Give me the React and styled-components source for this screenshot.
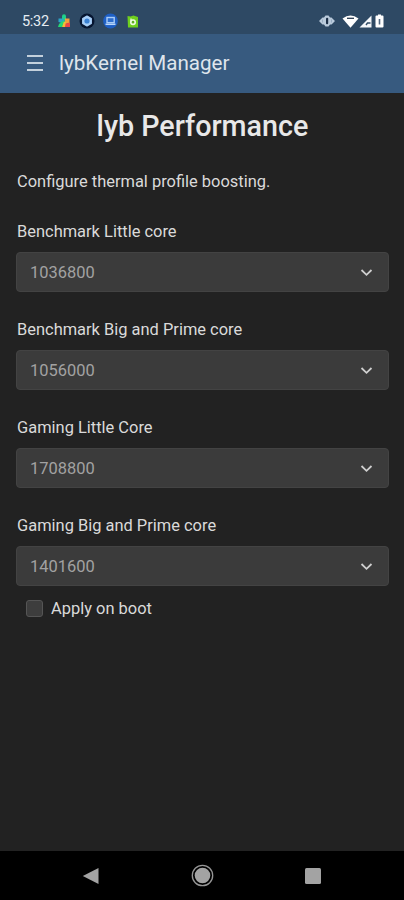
import React, { useState } from 'react';
import { styled, createGlobalStyle } from 'styled-components';

const GlobalStyle = createGlobalStyle`
  * {
    box-sizing: border-box;
  }

  body {
    margin: 0;
    background: #222;
    font-family: Roboto, 'Liberation Sans', sans-serif;
  }
`;

const Screen = styled.div`
  display: flex;
  flex-direction: column;
  width: 404px;
  height: 900px;
  overflow: hidden;
  background: #222;
  color: #dadada;
`;

const StatusBar = styled.div`
  display: flex;
  justify-content: space-between;
  align-items: center;
  height: 34px;
  padding: 8px 20px 0 22px;
  background: #2e4964;
`;

const StatusGroup = styled.div`
  display: flex;
  align-items: center;
  gap: ${props => props.$gap};
`;

const Clock = styled.span`
  width: 28px;
  margin-right: -1px;
  padding-top: 2px;
  font-size: 14.5px;
  line-height: 16px;
  letter-spacing: -0.3px;
  color: #e6edf3;
`;

const Header = styled.header`
  display: flex;
  align-items: center;
  gap: 16px;
  height: 59px;
  padding: 0 27px 2px;
  background: #375a7f;
`;

const MenuButton = styled.button`
  display: flex;
  padding: 0;
  border: none;
  background: none;
  cursor: pointer;
`;

const AppName = styled.span`
  font-size: 20.6px;
  line-height: 24px;
  color: #dfe5ec;
`;

const Content = styled.main`
  flex: 1;
  padding: 16px 15px 0 16px;
`;

const Title = styled.h1`
  margin: 0;
  font-size: 28.7px;
  font-weight: 500;
  line-height: 34px;
  text-align: center;
  color: #e8e8e8;
`;

const Description = styled.p`
  margin: 27px 0 26px;
  padding-left: 1px;
  font-size: 16.45px;
  line-height: 24px;
`;

const Field = styled.div`
  margin-bottom: 26px;

  &:last-of-type {
    margin-bottom: 0;
  }
`;

const Label = styled.label`
  display: block;
  margin-bottom: 8px;
  padding-left: 1px;
  font-size: 16.45px;
  line-height: 24px;
`;

const Select = styled.button`
  display: flex;
  justify-content: space-between;
  align-items: center;
  width: 100%;
  height: 40px;
  padding: 0 15px 0 13px;
  border: 1px solid #434343;
  border-radius: 4px;
  background: #3b3b3b;
  font-family: inherit;
  font-size: 16.45px;
  color: #a2a2a2;
  cursor: pointer;
`;

const CheckRow = styled.label`
  display: flex;
  align-items: center;
  gap: 8px;
  margin-top: 11px;
  padding-left: 10px;
  font-size: 16.45px;
  line-height: 24px;
`;

const Checkbox = styled.input`
  appearance: none;
  width: 17px;
  height: 17px;
  margin: 0 0 1px;
  border: 1px solid #555;
  border-radius: 3px;
  background: ${props => (props.checked ? '#375a7f' : '#3d3d3d')};
`;

const NavBar = styled.nav`
  display: flex;
  justify-content: space-between;
  align-items: center;
  height: 49px;
  padding: 0 82px;
  background: #000;
`;

const fields = [
  { label: 'Benchmark Little core', value: '1036800' },
  { label: 'Benchmark Big and Prime core', value: '1056000' },
  { label: 'Gaming Little Core', value: '1708800' },
  { label: 'Gaming Big and Prime core', value: '1401600' },
];

const PuzzleIcon = () => (
  <svg width="14" height="14" viewBox="0 0 14 14">
    <path d="M5 4.5V2.2a2 2 0 0 1 4 0V5L7 8z" fill="#1fd08a" />
    <path d="M1.5 4.5H6l2 3-3 1.5-3.500-1z" fill="#2aa5c8" />
    <path d="M1 13l1-3 4-3.500 2 2L5 13z" fill="#25d873" />
    <path d="M8 4.5h4.500v5L8 8.500z" fill="#f0a13c" />
    <path d="M7 7.5l3 1-1 4.500H5z" fill="#f3bd38" />
    <path d="M8.5 9.500l4.500-1V13H8z" fill="#ee4545" />
  </svg>
);

const HexIcon = () => (
  <svg width="16" height="16" viewBox="0 0 16 16">
    <circle cx="8" cy="8" r="7.5" fill="#061530" />
    <path
      d="M8 3l4.300 2.500v5L8 13l-4.300-2.500v-5z"
      fill="#a9d0f8"
      stroke="#a9d0f8"
      strokeWidth="1.2"
      strokeLinejoin="round"
    />
    <circle cx="8" cy="8" r="2.6" fill="#3b82d4" />
  </svg>
);

const LaptopIcon = () => (
  <svg width="16" height="16" viewBox="0 0 16 16">
    <circle cx="7.5" cy="8" r="7.4" fill="#1e5fc4" />
    <rect x="4" y="4.5" width="7.2" height="5.2" fill="#2c6dce" stroke="#a9ccf7" strokeWidth="1.4" />
    <path d="M2.500 11.300h10" stroke="#b9d6fa" strokeWidth="1.5" />
  </svg>
);

const BadgeIcon = () => (
  <svg width="12" height="14" viewBox="0 0 12 14">
    <path d="M.5 2l3 .5 3-1L11 3v10.500H1z" fill="#6fd01e" />
    <circle cx="6" cy="8.2" r="2.2" fill="#5fae22" stroke="#effbe2" strokeWidth="1.6" />
    <path d="M4 4.500v3" stroke="#effbe2" strokeWidth="1.3" />
  </svg>
);

const VibrateIcon = () => (
  <svg width="16" height="12" viewBox="0 0 16 12">
    <path d="M0 6l3.500-3.500h1.500L6.500.5h3L11 2.500h1.500L16 6l-3.500 3.500H11L9.500 11.500h-3L5 9.500H3.500z" fill="#b9cadb" />
    <path d="M3.500 4.500v3M12.500 4.500v3" stroke="#8fa5bb" strokeWidth="0.8" />
    <rect x="7" y="2.7" width="2.2" height="6.6" rx="1" fill="#1d3048" />
  </svg>
);

const WifiIcon = () => (
  <svg width="17" height="13" viewBox="0 0 17 13">
    <path d="M.5 3.500Q8.500-2.500 16.500 3.500L8.500 12.800z" fill="#fff" />
    <path d="M5 3.300h7" stroke="#25384f" strokeWidth="1.3" fill="none" />
  </svg>
);

const SignalIcon = () => (
  <svg width="13" height="13" viewBox="0 0 13 13">
    <path d="M12.500.5v12H.5z" fill="#f4f7fa" />
    <path d="M7 10l1.500-2h3" stroke="#2e4964" strokeWidth="1.4" fill="none" />
  </svg>
);

const BatteryIcon = () => (
  <svg width="9" height="14" viewBox="0 0 9 14">
    <path d="M3 .5h3v1h1.500q1 0 1 1v10q0 1-1 1h-6q-1 0-1-1v-10q0-1 1-1H3z" fill="#fff" />
    <path d="M4.500 5v5.500" stroke="#50677f" strokeWidth="1.6" />
  </svg>
);

const MenuIcon = () => (
  <svg width="16" height="18" viewBox="0 0 16 18">
    <path d="M0 2h16M0 9h16M0 16h16" stroke="#c3d0dc" strokeWidth="2" />
  </svg>
);

const ChevronIcon = () => (
  <svg width="13" height="9" viewBox="0 0 13 9">
    <path d="M1.500 2l5 4.800 5-4.800" stroke="#cfcfcf" strokeWidth="1.8" fill="none" />
  </svg>
);

const BackIcon = () => (
  <svg width="18" height="18" viewBox="0 0 18 18">
    <path d="M16.500 1v16L.8 9z" fill="#a3a3a3" />
  </svg>
);

const HomeIcon = () => (
  <svg width="24" height="24" viewBox="0 0 24 24">
    <circle cx="12.5" cy="11.5" r="10.2" stroke="#969696" strokeWidth="1.3" fill="none" />
    <circle cx="12.5" cy="11.5" r="7.8" fill="#a3a3a3" />
  </svg>
);

const RecentsIcon = () => (
  <svg width="18" height="18" viewBox="0 0 18 18">
    <rect x="1" y="1" width="16" height="16" rx="1.5" fill="#a3a3a3" />
  </svg>
);

const App = () => {
  const [applyOnBoot, setApplyOnBoot] = useState(false);

  return (
    <>
      <GlobalStyle />
      <Screen>
        <StatusBar>
          <StatusGroup $gap="8px">
            <Clock>5:32</Clock>
            <PuzzleIcon />
            <HexIcon />
            <LaptopIcon />
            <BadgeIcon />
          </StatusGroup>
          <StatusGroup $gap="7px">
            <VibrateIcon />
            <StatusGroup $gap="3px">
              <StatusGroup $gap="0">
                <WifiIcon />
                <SignalIcon />
              </StatusGroup>
              <BatteryIcon />
            </StatusGroup>
          </StatusGroup>
        </StatusBar>

        <Header>
          <MenuButton aria-label="Menu">
            <MenuIcon />
          </MenuButton>
          <AppName>lybKernel Manager</AppName>
        </Header>

        <Content>
          <Title>lyb Performance</Title>
          <Description>Configure thermal profile boosting.</Description>

          {fields.map(field => (
            <Field key={field.label}>
              <Label>{field.label}</Label>
              <Select>
                {field.value}
                <ChevronIcon />
              </Select>
            </Field>
          ))}

          <CheckRow>
            <Checkbox
              type="checkbox"
              checked={applyOnBoot}
              onChange={e => setApplyOnBoot(e.target.checked)}
            />
            Apply on boot
          </CheckRow>
        </Content>

        <NavBar>
          <BackIcon />
          <HomeIcon />
          <RecentsIcon />
        </NavBar>
      </Screen>
    </>
  );
};

export default App;
